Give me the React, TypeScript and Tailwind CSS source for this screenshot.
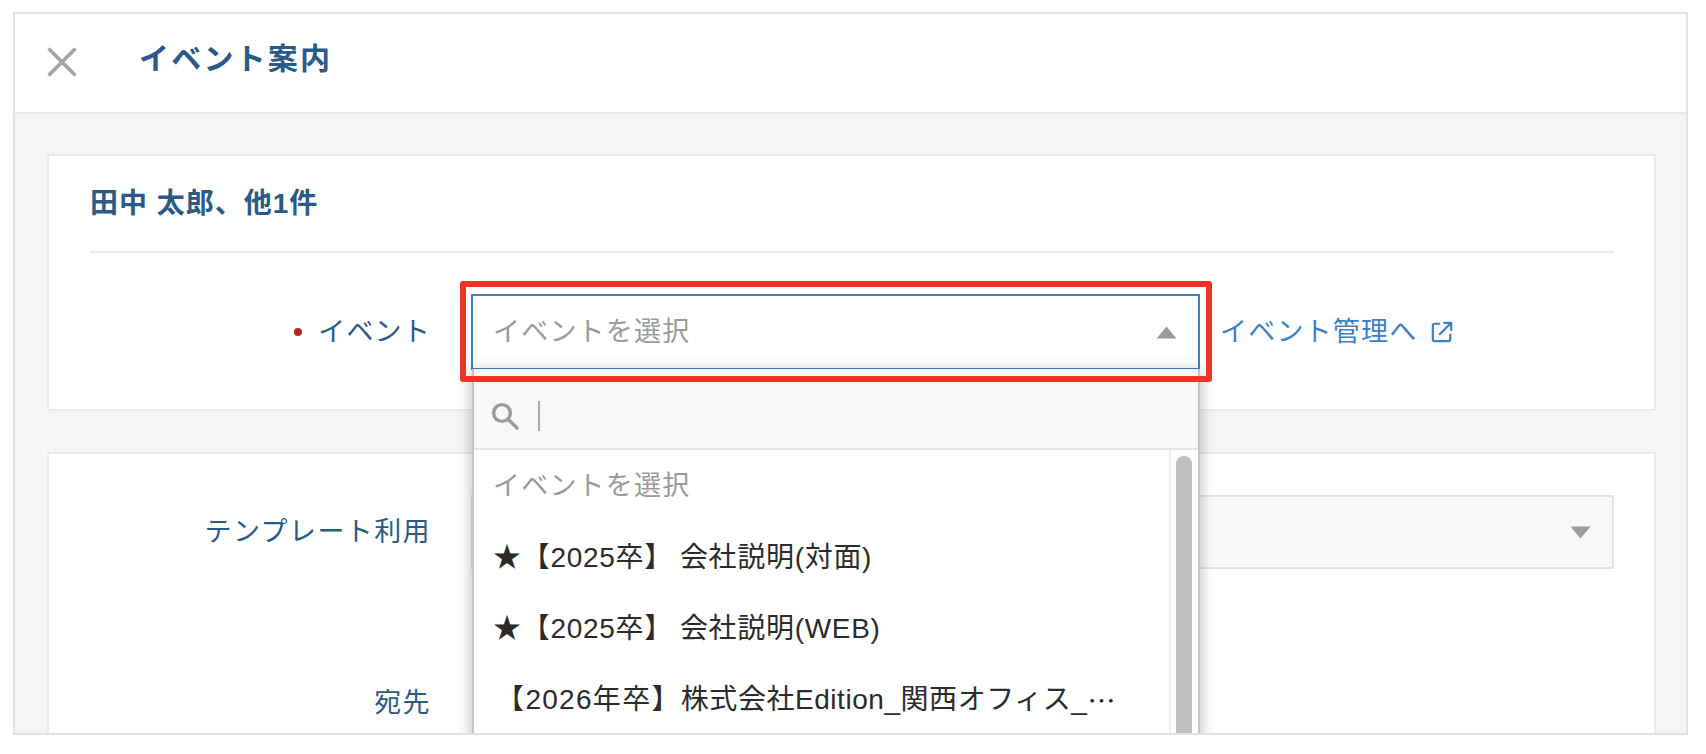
import React from "react";

const font = { fontFamily: '"Liberation Sans", "Noto Sans CJK JP", sans-serif' };

function Caret({ up, className }: { up?: boolean; className?: string }) {
  return (
    <svg width="21" height="13" viewBox="0 0 21 13" className={className}>
      <path d={up ? "M10.5 0.5 L20.5 12.5 H0.5 Z" : "M0.5 0.5 H20.5 L10.5 12.5 Z"} fill="#9b9b9b" />
    </svg>
  );
}

export default function App() {
  return (
    <div style={font} className="relative h-[754px] w-[1706px] overflow-hidden bg-white">
      <div className="relative ml-[13px] mt-[12px] flex h-[723px] w-[1675px] flex-col overflow-hidden border-2 border-[#e2e2e2] bg-[#f5f5f5]">
        {/* header */}
        <div className="flex h-[100px] shrink-0 items-center border-b-2 border-[#e8e8e8] bg-white pl-[32px]">
          <svg width="30" height="30" viewBox="0 0 30 30" fill="none" stroke="#a3a3a3" strokeWidth="3.6" className="mb-[2px]">
            <path d="M1.5 1.5 L28.5 28.5 M28.5 1.5 L1.5 28.5" />
          </svg>
          <h1 className="mb-[9px] ml-[62px] text-[30px] font-bold tracking-[2.2px] text-[#2a5a85]">イベント案内</h1>
        </div>

        {/* body */}
        <div className="flex flex-col gap-[41px] pl-[32px] pr-[30px] pt-[40px]">
          <section className="h-[257px] shrink-0 border-2 border-[#ebebeb] bg-white pl-[41px] pr-[40px]">
            <div className="flex h-[97px] items-center border-b-2 border-[#ebebeb]">
              <h2 className="text-[28px] font-bold tracking-[1px] text-[#2a5a85]">田中 太郎、他1件</h2>
            </div>
            <div className="flex h-[158px] items-center">
              <div className="flex w-[341px] items-center justify-end">
                <span className="mr-[16px] h-[8px] w-[8px] rounded-full bg-[#b32a1e]" />
                <span className="text-[27px] tracking-[1.2px] text-[#2a5a85]">イベント</span>
              </div>
              <div className="ml-[40px] flex h-[76px] w-[729px] items-center justify-between border-2 border-[#3d7fc9] bg-white pl-[20px] pr-[21px]">
                <span className="text-[27px] tracking-[1.2px] text-[#9a9a9a]">イベントを選択</span>
                <Caret up />
              </div>
              <a className="ml-[20px] flex items-center text-[27px] tracking-[1.2px] text-[#3d7fc9]">
                イベント管理へ
                <svg width="22" height="22" viewBox="0 0 24 24" fill="none" stroke="#3d7fc9" strokeWidth="2.4" strokeLinejoin="round" className="ml-[14px]">
                  <path d="M10 3 H4 Q2 3 2 5 V20 Q2 22 4 22 H19 Q21 22 21 20 V14" />
                  <path d="M9 15 L21.5 2.5 M13.5 2 H22 V10.5" />
                </svg>
              </a>
            </div>
          </section>

          <section className="h-[400px] shrink-0 border-2 border-[#ebebeb] bg-white pl-[41px] pr-[40px]">
            <div className="mt-[41px] flex h-[74px] items-center">
              <div className="w-[341px] text-right text-[27px] tracking-[1.4px] text-[#2a5a85]">テンプレート利用</div>
              <div className="ml-[40px] flex h-[74px] flex-1 items-center justify-end border-2 border-[#e4e4e4] bg-[#f8f8f8] pr-[21px]">
                <Caret />
              </div>
            </div>
            <div className="mt-[114px] flex items-center">
              <div className="w-[341px] text-right text-[27px] tracking-[1.4px] text-[#2a5a85]">宛先</div>
            </div>
          </section>
        </div>

        {/* dropdown */}
        <div className="absolute left-[457px] top-[355px] flex h-[400px] w-[728px] flex-col border-x-2 border-[#c4c4c4] bg-white shadow-[0_2px_14px_rgba(0,0,0,0.28)]">
          <div className="flex h-[81px] shrink-0 items-center border-b-2 border-[#e6e6e6] bg-[#f8f8f8] pl-[17px] pt-[14px]">
            <svg width="28" height="28" viewBox="0 0 28 28" fill="none" stroke="#9b9b9b" strokeWidth="3.4">
              <circle cx="11" cy="11" r="8.4" />
              <path d="M17 17 L26 26" strokeLinecap="round" />
            </svg>
            <span className="ml-[19px] h-[30px] w-[2px] bg-[#aaaaaa]" />
          </div>
          <div className="flex flex-1">
            <ul className="w-[695px] pt-[1px] text-[28px] tracking-[0.7px] text-[#2b2b2b]">
              <li className="flex h-[71px] items-center pl-[19px] text-[27px] tracking-[1.2px] text-[#9a9a9a]">イベントを選択</li>
              <li className="flex h-[71px] items-center pl-[19px]">
                <span>★【2025卒】</span>
                <span className="ml-[7px]">会社説明(対面)</span>
              </li>
              <li className="flex h-[71px] items-center pl-[19px]">
                <span>★【2025卒】</span>
                <span className="ml-[7px]">会社説明(WEB)</span>
              </li>
              <li className="flex h-[71px] items-center whitespace-pre pl-[13px] tracking-[0.55px]">
                <span className="tracking-[1.3px]">{" 【2026年卒】"}</span>
                {"株式会社Edition_関西オフィス_"}
                <span style={{ fontFamily: '"Noto Sans CJK JP", sans-serif' }}>…</span>
              </li>
            </ul>
            <div className="w-[29px] border-l-2 border-[#efefef] pl-[5px] pt-[6px]">
              <div className="h-[300px] w-[16px] rounded-full bg-[#bfbfbf]" />
            </div>
          </div>
        </div>

        {/* annotation */}
        <div className="absolute left-[445px] top-[267px] h-[101px] w-[752px] rounded-[3px] border-[6px] border-[#ee3524]" />
      </div>
    </div>
  );
}
